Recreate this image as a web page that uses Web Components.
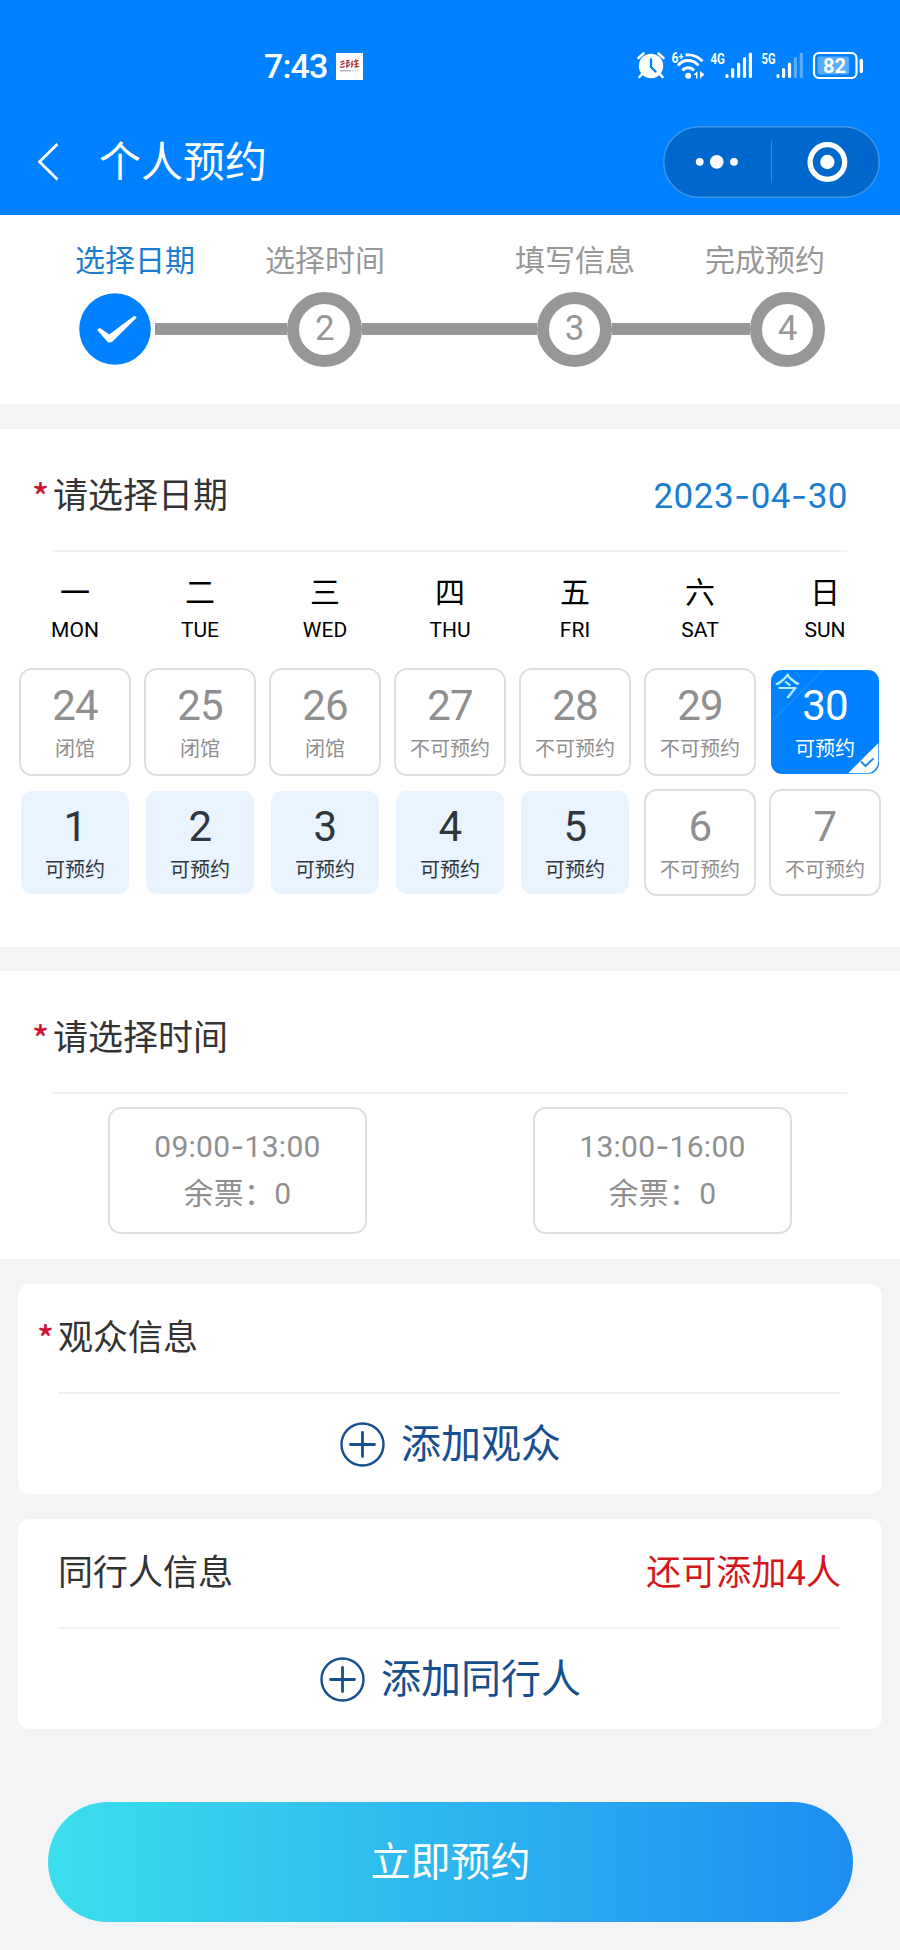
<!DOCTYPE html>
<html lang="zh-CN">
<head>
<meta charset="UTF-8">
<meta name="viewport" content="width=device-width, initial-scale=1.0">
<title>个人预约</title>
<style>
    html, body {
        margin: 0;
        padding: 0;
    }
    body {
        width: 900px;
        height: 1950px;
        overflow: hidden;
        background: #f3f4f6;
        font-family: Roboto, "Noto Sans CJK SC", sans-serif;
        color: #333;
    }
</style>
</head>
<body>
<booking-page></booking-page>

<script>
class StatusBar extends HTMLElement {
    constructor() {
        super().attachShadow({ mode: "open" });

        this.shadowRoot.innerHTML = `
            <style>
                :host {
                    display: flex;
                    align-items: center;
                    height: 32px;
                    padding: 50px 36px 0 264px;
                    color: #fff;
                }
                .time {
                    font-size: 34px;
                    font-weight: 500;
                    line-height: 32px;
                    letter-spacing: -0.9px;
                }
                .app {
                    margin: 0 auto 0 9px;
                }
                svg {
                    display: block;
                }
                text {
                    font-family: Roboto, sans-serif;
                    font-weight: 700;
                }
            </style>
            <span class="time">7:43</span>
            <svg class="app" width="27" height="27" viewBox="0 0 28 28" fill="none">
                <rect width="28" height="28" fill="#fff"/>
                <g stroke="#a8323a" stroke-width="1.3" stroke-linecap="round">
                    <path d="M5 9.500l3-1M5.500 12l3-1.500M4.500 14.500c2 .5 3 .5 4-.5M11 8h2.500M10.500 10.500l3.500-.5M12 8.500l-1 6M14 12l-2.500 2.500M17 8.500l-1 3 1.500 0-1.500 3M19 9l4-1M20.500 7l1 7.500M19.500 12l3.500-1M19.500 14.500l4-.5"/>
                </g>
                <path d="M4.500 18.500h11" stroke="#666" stroke-dasharray="1.500 .6"/>
                <path d="M17 18.500h6" stroke="#999" stroke-dasharray="1 1.500"/>
            </svg>
            <svg width="227" height="32" viewBox="636 50 227 32" fill="#fff">
                <!-- alarm clock -->
                <circle cx="650" cy="66" r="12.200"/>
                <path d="M637.500 58l5-4.500M662.500 58l-5-4.500M642 73l-3.500 4M658 73l3.500 4" stroke="#fff" stroke-width="2.600" stroke-linecap="round"/>
                <path d="M650 59.500v7.500l4.500 4.500" fill="none" stroke="#0081ff" stroke-width="2.400" stroke-linecap="round" stroke-linejoin="round"/>
                <!-- wifi 6+ -->
                <text x="670.500" y="62.500" font-size="14" textLength="7" lengthAdjust="spacingAndGlyphs">6</text>
                <text x="677.500" y="59.500" font-size="10" textLength="5" lengthAdjust="spacingAndGlyphs">+</text>
                <g fill="none" stroke="#fff" stroke-width="2.900">
                    <path d="M684.500 55c7-.8 12.800 1.700 17 6.200"/>
                    <path d="M677 65.500c5.700-6.600 14.600-6.600 20.500 0"/>
                    <path d="M681.500 70.500c3.200-3.600 8.300-3.600 11.500 0"/>
                </g>
                <circle cx="687.200" cy="75.800" r="3"/>
                <path d="M692.500 75l4-4v7.500h-1.500v-3.500zM703.500 74.500l-4.500 4v-7.500z"/>
                <!-- SIM 1 -->
                <text x="709.500" y="63.700" font-size="15.500" textLength="14.500" lengthAdjust="spacingAndGlyphs">4G</text>
                <g stroke="#fff" stroke-width="3.200" stroke-linecap="round">
                    <path d="M726 75.500v1M731.700 69.500v7M737.600 64v12.500M743.500 58.500v18M749.400 54v22.500"/>
                </g>
                <!-- SIM 2 -->
                <text x="760.500" y="63.700" font-size="15.500" textLength="14" lengthAdjust="spacingAndGlyphs">5G</text>
                <g stroke="#fff" stroke-width="3.200" stroke-linecap="round">
                    <path d="M777 75.500v1M782.600 69.500v7M788.500 64v12.500"/>
                    <path d="M794.400 58.500v18M800.300 54v22.500" opacity=".35"/>
                </g>
                <!-- battery -->
                <rect x="813" y="53" width="42.500" height="25" rx="5" fill="none" stroke="#fff" stroke-width="2.200"/>
                <rect x="816.500" y="56.500" width="31.500" height="18" rx="2" opacity=".35"/>
                <path d="M860.300 60.500v11" stroke="#fff" stroke-width="3.400" stroke-linecap="round"/>
                <text x="822" y="73" font-size="20.500" textLength="23" lengthAdjust="spacingAndGlyphs">82</text>
            </svg>
        `;
    }
}

class NavBar extends HTMLElement {
    constructor() {
        super().attachShadow({ mode: "open" });

        this.shadowRoot.innerHTML = `
            <style>
                :host {
                    display: flex;
                    align-items: center;
                    height: 72px;
                    padding: 44px 20px 17px 36px;
                    color: #fff;
                }
                .title {
                    margin: 2px auto 0 39px;
                    font-size: 42px;
                    line-height: 60px;
                }
                svg {
                    display: block;
                }
            </style>
            <svg width="24" height="40" viewBox="0 0 24 40" fill="none" stroke="#fff" stroke-width="2.800">
                <path d="M21.500 2L3.500 19.700 21.500 37.500"/>
            </svg>
            <span class="title"><slot></slot></span>
            <svg width="217" height="72" viewBox="0 0 217 72">
                <rect x=".7" y=".7" width="215.600" height="70.600" rx="35.300" fill="#0067cc" stroke="#3d97ea" stroke-width="1.400"/>
                <path d="M108.500 14v43" stroke="#2f86da" stroke-width="1.200"/>
                <g fill="#fff">
                    <circle cx="36.700" cy="35.800" r="3.900"/>
                    <circle cx="53.800" cy="35.800" r="6.900"/>
                    <circle cx="71" cy="35.800" r="3.900"/>
                    <circle cx="164.400" cy="36" r="7.200"/>
                </g>
                <circle cx="164.400" cy="36" r="17.300" fill="none" stroke="#fff" stroke-width="5.300"/>
            </svg>
        `;
    }
}

class StepBar extends HTMLElement {
    constructor() {
        super().attachShadow({ mode: "open" });

        this.shadowRoot.innerHTML = `
            <style>
                :host {
                    display: block;
                    box-sizing: border-box;
                    height: 189px;
                    padding: 21px 75px 0;
                    background: #fff;
                    color: #979797;
                }
                .labels, .track {
                    display: flex;
                    align-items: center;
                }
                .labels {
                    justify-content: space-between;
                    height: 44px;
                    font-size: 30px;
                }
                .labels span:nth-child(3) {
                    margin-left: 60px;
                }
                .active {
                    color: #1a7dd0;
                }
                .track {
                    height: 76px;
                    margin-top: 11px;
                    padding-left: 4px;
                }
                .dot {
                    flex: none;
                    box-sizing: border-box;
                    width: 75px;
                    height: 75px;
                    border: 12.5px solid #979797;
                    border-radius: 50%;
                    font-size: 35px;
                    line-height: 50px;
                    text-align: center;
                }
                .line {
                    flex: 175 0 0;
                    height: 12.5px;
                    background: #979797;
                }
                .line.first {
                    flex-grow: 132.5;
                    margin-left: 4px;
                }
                .line.last {
                    flex-grow: 138;
                }
                svg {
                    flex: none;
                    display: block;
                }
            </style>
            <div class="labels">
                <span class="active">选择日期</span>
                <span>选择时间</span>
                <span>填写信息</span>
                <span>完成预约</span>
            </div>
            <div class="track">
                <svg width="72" height="72" viewBox="0 0 72 72">
                    <circle cx="36" cy="36" r="35.800" fill="#0081ff"/>
                    <path d="M18.200 37q1.500-3 4-1.200l8 5.700 24-18q3-1.300 3.400 1.300L33.500 48.500q-2.500 2-5 .2z" fill="#fff"/>
                </svg>
                <i class="line first"></i>
                <span class="dot">2</span>
                <i class="line"></i>
                <span class="dot">3</span>
                <i class="line last"></i>
                <span class="dot">4</span>
            </div>
        `;
    }
}

/* White panel with a title row. `card` makes it an inset rounded card. */
class FormSection extends HTMLElement {
    constructor() {
        super().attachShadow({ mode: "open" });

        this.shadowRoot.innerHTML = `
            <style>
                :host {
                    display: block;
                    box-sizing: border-box;
                    background: #fff;
                }
                :host([card]) {
                    margin: 0 18px;
                    border-radius: 12px;
                }
                header {
                    display: flex;
                    align-items: center;
                    justify-content: space-between;
                    box-sizing: border-box;
                    height: 123px;
                    margin: 0 53px;
                    padding-top: 14px;
                    border-bottom: 2px solid #f2f2f3;
                    font-size: 35px;
                    line-height: 50px;
                }
                :host([card]) header {
                    height: 110px;
                    margin: 0 41px 0 40px;
                    padding-top: 2px;
                }
                .title {
                    display: flex;
                }
                .mark {
                    width: 21px;
                    margin-left: -21px;
                    color: #cf1535;
                    font-family: "Noto Sans CJK SC", sans-serif;
                    font-size: 35px;
                    font-weight: 500;
                    line-height: 45px;
                }
                :host(:not([required])) .mark {
                    display: none;
                }
            </style>
            <header>
                <div class="title"><span class="mark">*</span><slot name="title"></slot></div>
                <slot name="extra"></slot>
            </header>
            <slot></slot>
        `;
    }
}

class DayCell extends HTMLElement {
    constructor() {
        super().attachShadow({ mode: "open" });

        this.shadowRoot.innerHTML = `
            <style>
                :host {
                    display: flex;
                    flex-direction: column;
                    align-items: center;
                    box-sizing: border-box;
                    position: relative;
                    height: 107.5px;
                    padding-top: 11px;
                    border: 2px solid #dedede;
                    border-radius: 13px;
                    color: #8f8f8f;
                }
                :host([state="open"]) {
                    border-color: transparent;
                    background: #eaf4ff;
                    background-clip: padding-box;
                    color: #30363d;
                }
                :host([state="selected"]) {
                    border-color: transparent;
                    background: #0081ff;
                    background-clip: padding-box;
                    color: #fff;
                }
                .day {
                    font-size: 42px;
                    line-height: 50px;
                    letter-spacing: -0.8px;
                }
                .note {
                    margin-top: 3px;
                    font-size: 20px;
                    line-height: 30px;
                }
                .today, .corner {
                    position: absolute;
                }
                .today {
                    left: 3px;
                    top: 3px;
                    font-size: 26px;
                    line-height: 28px;
                    color: #b9f0ff;
                }
                .corner {
                    left: 0;
                    top: 0;
                }
            </style>
            <svg class="corner" width="108" height="104" viewBox="0 0 108 104" fill="none">
                <path d="M1 51L52 0" stroke="#2e99ff"/>
                <path d="M77 103.300L107.300 73V91a12.300 12.300 0 0 1-12.300 12.300z" fill="#fff"/>
                <path d="M90 91.500l4.500 4.500 8-7.500" stroke="#2a8ae6" stroke-width="2"/>
            </svg>
            <span class="today">今</span>
            <span class="day"></span>
            <span class="note"></span>
        `;
    }

    connectedCallback() {
        this.shadowRoot.querySelector(".day").textContent = this.getAttribute("day");
        this.shadowRoot.querySelector(".note").textContent = this.getAttribute("note");
        if (this.getAttribute("state") !== "selected") {
            this.shadowRoot.querySelectorAll(".today, .corner").forEach((el) => el.remove());
        }
    }
}

class WeekCalendar extends HTMLElement {
    constructor() {
        super().attachShadow({ mode: "open" });

        const weekdays = [
            ["一", "MON"], ["二", "TUE"], ["三", "WED"], ["四", "THU"],
            ["五", "FRI"], ["六", "SAT"], ["日", "SUN"],
        ];
        const days = [
            [24, "闭馆"], [25, "闭馆"], [26, "闭馆"],
            [27, "不可预约"], [28, "不可预约"], [29, "不可预约"],
            [30, "可预约", "selected"],
            [1, "可预约", "open"], [2, "可预约", "open"], [3, "可预约", "open"],
            [4, "可预约", "open"], [5, "可预约", "open"],
            [6, "不可预约"], [7, "不可预约"],
        ];

        this.shadowRoot.innerHTML = `
            <style>
                :host {
                    display: block;
                    padding: 19px 19.25px 50.5px;
                }
                .grid {
                    display: grid;
                    grid-template-columns: repeat(7, 111.5px);
                    gap: 13.2px 13.5px;
                }
                .week {
                    height: 97px;
                    text-align: center;
                    color: #000;
                }
                .week b, .week span {
                    display: block;
                    font-weight: 400;
                }
                .week b {
                    font-size: 30px;
                    line-height: 44px;
                }
                .week span {
                    font-size: 21px;
                    line-height: 30px;
                }
            </style>
            <div class="grid week">
                ${weekdays.map(([cn, en]) => `<div><b>${cn}</b><span>${en}</span></div>`).join("")}
            </div>
            <div class="grid">
                ${days.map(([day, note, state = "off"]) => `<day-cell day="${day}" note="${note}" state="${state}"></day-cell>`).join("")}
            </div>
        `;
    }
}

class TimeSlot extends HTMLElement {
    constructor() {
        super().attachShadow({ mode: "open" });

        this.shadowRoot.innerHTML = `
            <style>
                :host {
                    display: flex;
                    flex-direction: column;
                    align-items: center;
                    box-sizing: border-box;
                    width: 259.5px;
                    height: 127px;
                    padding-top: 14px;
                    border: 2px solid #dedede;
                    border-radius: 13px;
                    color: #8f8f8f;
                    font-size: 30px;
                    line-height: 47px;
                    letter-spacing: 0.3px;
                }
            </style>
            <slot></slot>
            <slot name="left"></slot>
        `;
    }
}

class AddButton extends HTMLElement {
    constructor() {
        super().attachShadow({ mode: "open" });

        this.shadowRoot.innerHTML = `
            <style>
                :host {
                    display: flex;
                    align-items: center;
                    justify-content: center;
                    gap: 16px;
                    height: 100px;
                    padding-left: 1px;
                    color: #164f90;
                    font-size: 40px;
                    line-height: 58px;
                }
                span {
                    padding-top: 2px;
                }
            </style>
            <svg width="45" height="45" viewBox="0 0 45 45" fill="none" stroke="#164f90" stroke-width="2.400">
                <circle cx="22.500" cy="22.500" r="21"/>
                <path d="M10.500 22.500h24M22.500 10.500v24" stroke-width="2.800" stroke-linecap="round"/>
            </svg>
            <span><slot></slot></span>
        `;
    }
}

class SubmitButton extends HTMLElement {
    constructor() {
        super().attachShadow({ mode: "open" });

        this.shadowRoot.innerHTML = `
            <style>
                :host {
                    display: flex;
                    align-items: center;
                    justify-content: center;
                    box-sizing: border-box;
                    height: 120px;
                    margin: 73px 47px 0 48px;
                    padding-bottom: 7px;
                    border-radius: 60px;
                    background: linear-gradient(90deg, #3cdeed, #1e8df0);
                    color: #fff;
                    font-size: 40px;
                }
            </style>
            <span><slot></slot></span>
        `;
    }
}

class BookingPage extends HTMLElement {
    constructor() {
        super().attachShadow({ mode: "open" });

        this.shadowRoot.innerHTML = `
            <style>
                :host {
                    display: block;
                }
                .top {
                    height: 215px;
                    background: #0081ff;
                }
                main {
                    display: flex;
                    flex-direction: column;
                    gap: 25px;
                }
                .calendar {
                    height: 518px;
                }
                .time {
                    height: 288px;
                    margin-top: -1px;
                }
                .date {
                    color: #1a7dd0;
                    letter-spacing: 0.5px;
                    margin-right: -1px;
                }
                .dash {
                    font-family: Inter, sans-serif;
                    line-height: 1;
                }
                .remain {
                    color: #d4161b;
                }
                .slots {
                    display: grid;
                    grid-template-columns: 1fr 1fr;
                    justify-items: center;
                    padding: 13px 25px 25px;
                }
            </style>
            <div class="top">
                <status-bar></status-bar>
                <nav-bar>个人预约</nav-bar>
            </div>
            <main>
                <step-bar></step-bar>
                <form-section class="calendar" required>
                    <span slot="title">请选择日期</span>
                    <span slot="extra" class="date">2023<span class="dash">-</span>04<span class="dash">-</span>30</span>
                    <week-calendar></week-calendar>
                </form-section>
                <form-section class="time" required>
                    <span slot="title">请选择时间</span>
                    <div class="slots">
                        <time-slot>
                            <span>09:00<span class="dash">-</span>13:00</span>
                            <span slot="left">余票：0</span>
                        </time-slot>
                        <time-slot>
                            <span>13:00<span class="dash">-</span>16:00</span>
                            <span slot="left">余票：0</span>
                        </time-slot>
                    </div>
                </form-section>
                <form-section card required>
                    <span slot="title">观众信息</span>
                    <add-button>添加观众</add-button>
                </form-section>
                <form-section card>
                    <span slot="title">同行人信息</span>
                    <span slot="extra" class="remain">还可添加4人</span>
                    <add-button>添加同行人</add-button>
                </form-section>
            </main>
            <submit-button>立即预约</submit-button>
        `;
    }
}

customElements.define("status-bar", StatusBar);
customElements.define("nav-bar", NavBar);
customElements.define("step-bar", StepBar);
customElements.define("form-section", FormSection);
customElements.define("day-cell", DayCell);
customElements.define("week-calendar", WeekCalendar);
customElements.define("time-slot", TimeSlot);
customElements.define("add-button", AddButton);
customElements.define("submit-button", SubmitButton);
customElements.define("booking-page", BookingPage);
</script>
</body>
</html>
